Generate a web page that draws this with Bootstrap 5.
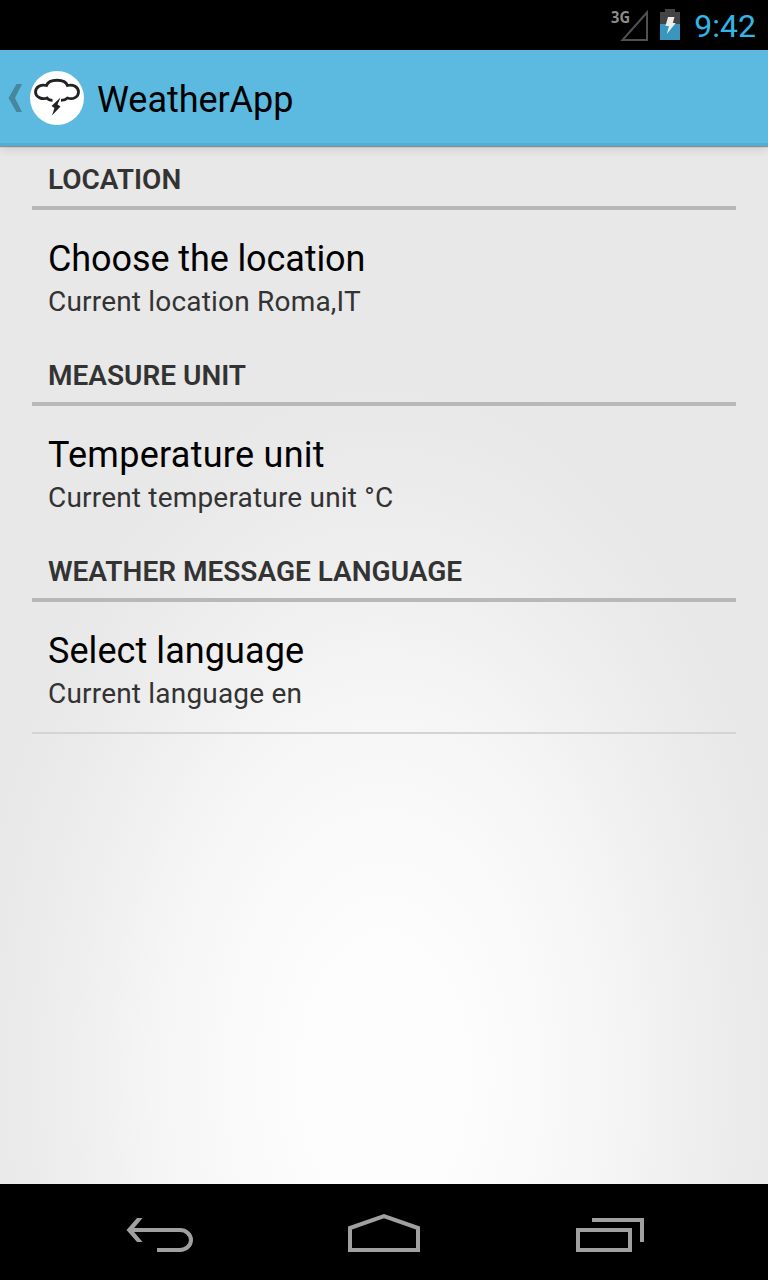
<!DOCTYPE html>
<html lang="en">
<head>
<meta charset="utf-8">
<meta name="viewport" content="width=device-width, initial-scale=1">
<title>WeatherApp</title>
<link href="https://cdn.jsdelivr.net/npm/bootstrap@5.3.0/dist/css/bootstrap.min.css" rel="stylesheet">
<style>
body { font-family: Roboto, sans-serif; line-height: 1; width: 768px; height: 1280px; overflow: hidden; }
svg { display: block; flex: none; }
.status-bar { height: 50px; background: #000; }
.clock { font-size: 32px; color: #33b5e5; letter-spacing: 0; padding-top: 1px; }
.net-label { font-family: "Open Sans", sans-serif; font-weight: 700; }
.action-bar { height: 96px; background: #5cbae0; border-bottom: 3px solid #52aed3; position: relative; z-index: 1; box-shadow: 0 1px 1px rgba(0,0,0,.35), 0 3px 10px rgba(0,0,0,.12); }
.app-title { font-size: 36px; color: #000; letter-spacing: -.05px; padding-top: 6px; }
.settings { background: radial-gradient(ellipse 430px 720px at 384px 930px, #fdfdfd 0%, #fdfdfd 12%, #fcfcfc 21%, #fafafa 33%, #f8f8f8 42%, #f5f5f5 54%, #f1f1f1 65%, #ededed 77%, #e9e9e9 91%, #e8e8e8 100%); }
.section-head { height: 64px; border-bottom: 4px solid #b8b8b8; color: #333; font-size: 28px; font-weight: 600; padding-top: 17px; }
.pref { height: 132px; padding-top: 30px; }
.pref-title { font-size: 36px; line-height: 38px; color: #000; }
.pref-sub { font-size: 28px; line-height: 32px; color: #333; margin-top: 8px; letter-spacing: .19px; }
.track-tight { letter-spacing: -.1px; }
.track-wide { letter-spacing: .27px; }
.track-normal { letter-spacing: .07px; }
.end-line { border-bottom: 2px solid #d4d4d4; }
.nav-keys { height: 96px; background: #000; }
</style>
</head>
<body class="d-flex flex-column m-0">
<header class="status-bar d-flex flex-shrink-0 justify-content-end align-items-center">
  <svg width="42" height="50" viewBox="608 0 42 50">
    <text class="net-label" x="611" y="23" font-size="16.5" textLength="19" lengthAdjust="spacingAndGlyphs" fill="#8c8c8c">3G</text>
    <path d="M622.5 40H647V12.5Z" fill="none" stroke="#505050" stroke-width="2"/>
  </svg>
  <svg width="44" height="50" viewBox="650 0 44 50">
    <path d="M665 9h10v3h5v12h-20V12h5z" fill="#444"/>
    <path d="M660 24h20v16h-20z" fill="#3b96bd"/>
    <path d="M668 17h6.500l-1.700 6h3L666.800 34l2.200-8h-3.500z" fill="#eee"/>
  </svg>
  <div class="clock pe-2 me-1">9:42</div>
</header>
<nav class="action-bar d-flex flex-shrink-0 align-items-center">
  <svg width="97" height="93" viewBox="0 50 97 93">
    <path d="M16.500 84H22L15 98l7 14h-5.500L8.500 98z" fill="#46869f"/>
    <circle cx="57" cy="98" r="27" fill="#fff"/>
    <path d="M52.500 100.300C50 100.300 48 99.500 47 98C42 100 35.500 97 35.500 92C35.500 87 41 84 46.500 85.500C49 78.500 65 78.500 67.500 85.500C73 84 78.500 87 78.500 92C78.500 97 73 100 67.500 98C66 99.500 64 100.300 61 100.300" fill="none" stroke="#222" stroke-width="2.800"/>
    <path d="M60.500 97.500L51.500 106L54.500 108L52 115.500L60.500 106.500L57.500 104.500Z" fill="#222"/>
  </svg>
  <div class="app-title">WeatherApp</div>
</nav>
<main class="settings flex-grow-1 px-4">
  <div class="mx-2">
    <h2 class="section-head ps-3 m-0">LOCATION</h2>
    <div class="pref ps-3">
      <div class="pref-title track-tight">Choose the location</div>
      <div class="pref-sub">Current location Roma,IT</div>
    </div>
    <h2 class="section-head ps-3 m-0">MEASURE UNIT</h2>
    <div class="pref ps-3">
      <div class="pref-title track-wide">Temperature unit</div>
      <div class="pref-sub">Current temperature unit °C</div>
    </div>
    <h2 class="section-head ps-3 m-0">WEATHER MESSAGE LANGUAGE</h2>
    <div class="pref end-line ps-3">
      <div class="pref-title track-normal">Select language</div>
      <div class="pref-sub">Current language en</div>
    </div>
  </div>
</main>
<footer class="nav-keys d-flex flex-shrink-0 justify-content-center">
  <svg width="768" height="96" viewBox="0 1184 768 96" fill="none" stroke="#a0a0a0" stroke-width="4">
    <path d="M157 1250H180A11 10 0 0 0 180 1230H130"/>
    <path d="M137 1218H142.500L132.500 1230L142.500 1242H137L126.500 1230Z" fill="#a0a0a0" stroke="none"/>
    <path d="M350 1250V1228L384 1216L418 1228V1250Z"/>
    <path d="M578 1230H630V1250H578ZM592 1220H642V1242"/>
  </svg>
</footer>
<script src="https://cdn.jsdelivr.net/npm/bootstrap@5.3.0/dist/js/bootstrap.bundle.min.js"></script>
</body>
</html>
